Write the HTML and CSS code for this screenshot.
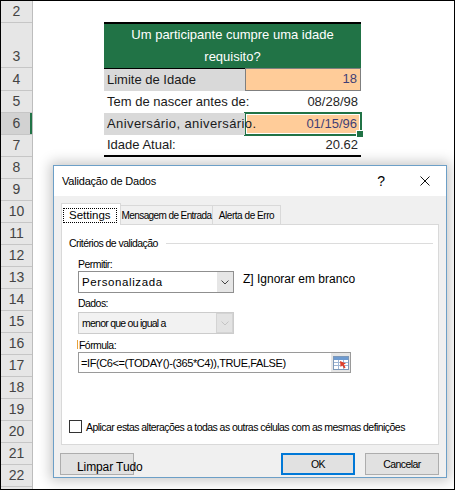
FILE: index.html
```html
<!DOCTYPE html>
<html>
<head>
<meta charset="utf-8">
<title>Validação de Dados</title>
<link rel="stylesheet" href="styles.css">
</head>
<body>
<div class="frame">
    <!-- row numbers -->
    <div class="rowheads">
        <div class="rh">2</div>
        <div class="rh tall">3</div>
        <div class="rh r4">4</div>
        <div class="rh">5</div>
        <div class="rh sel">6</div>
        <div class="rh">7</div>
        <div class="rh">8</div>
        <div class="rh">9</div>
        <div class="rh">10</div>
        <div class="rh">11</div>
        <div class="rh">12</div>
        <div class="rh">13</div>
        <div class="rh">14</div>
        <div class="rh">15</div>
        <div class="rh">16</div>
        <div class="rh">17</div>
        <div class="rh">18</div>
        <div class="rh">19</div>
        <div class="rh">20</div>
        <div class="rh">21</div>
        <div class="rh">22</div>
        <div class="rh"></div>
    </div>

    <!-- worksheet -->
    <div class="sheet">
        <div class="tbl">
            <div class="thead">Um participante cumpre uma idade<br>requisito?</div>
            <div class="trow r4">
                <div class="lbl shade">Limite de Idade</div>
                <div class="val input">18</div>
            </div>
            <div class="trow">
                <div class="lbl">Tem de nascer antes de:</div>
                <div class="val">08/28/98</div>
            </div>
            <div class="trow">
                <div class="lbl shade spread">Aniversário, aniversário.</div>
                <div class="val input active">01/15/96</div>
            </div>
            <div class="trow r7">
                <div class="lbl">Idade Atual:</div>
                <div class="val">20.62</div>
            </div>
        </div>
    </div>

    <!-- data validation dialog -->
    <div class="dialog">
        <div class="titlebar">
            <span class="title">Validação de Dados</span>
            <span class="help">?</span>
            <svg class="close" width="10" height="10" viewBox="0 0 10 10"><path d="M0.5 0.5L9.5 9.5M9.5 0.5L0.5 9.5" stroke="#111" stroke-width="1"/></svg>
        </div>
        <div class="dbody">
            <div class="tabs">
                <div class="tab active"><span class="focus">Settings</span></div>
                <div class="tab t2">Mensagem de Entrada</div>
                <div class="tab t3">Alerta de Erro</div>
            </div>
            <div class="panel">
                <div class="group"><span>Critérios de validação</span><i class="rule"></i></div>

                <div class="lab first">Permitir:</div>
                <div class="line">
                    <div class="combo">
                        <span class="txt wide">Personalizada</span>
                        <span class="arr"><svg width="8" height="5" viewBox="0 0 8 5"><path d="M0.5 0.5L4 4L7.5 0.5" fill="none" stroke="#444"/></svg></span>
                    </div>
                    <span class="ignore">Z] Ignorar em branco</span>
                </div>

                <div class="lab">Dados:</div>
                <div class="combo dis">
                    <span class="txt tight">menor que ou igual a</span>
                    <span class="arr"><svg width="8" height="5" viewBox="0 0 8 5"><path d="M0.5 0.5L4 4L7.5 0.5" fill="none" stroke="#c4c4c4"/></svg></span>
                </div>

                <div class="lab f">Fórmula:</div>
                <div class="formula">
                    <span class="expr">=IF(C6&lt;=(TODAY()-(365*C4)),TRUE,FALSE)</span>
                    <span class="pick">
                        <svg width="16" height="14" viewBox="0 0 16 14">
                            <rect x="0.5" y="0.5" width="15" height="13" fill="#fff" stroke="#7d98b8"/>
                            <rect x="1" y="1" width="14" height="3" fill="#6d9ad0"/>
                            <path d="M1 6.5H15M1 9.5H15M5.5 4V13M10.5 4V13" stroke="#9fb6d4"/>
                            <path d="M7 5L13 7.5L10.8 8.6L12.6 11.4L11 12.4L9.3 9.6L7.6 11Z" fill="#e0402a"/>
                        </svg>
                    </span>
                </div>

                <div class="apply"><i class="box"></i><span>Aplicar estas alterações a todas as outras células com as mesmas definições</span></div>
            </div>
            <div class="buttons">
                <button class="btn clear">Limpar Tudo</button>
                <button class="btn ok">OK</button>
                <button class="btn cancel">Cancelar</button>
            </div>
        </div>
    </div>
</div>
</body>
</html>
```

FILE: styles.css
```css
* {
    box-sizing: border-box;
}

body {
    margin: 0;
    background: #fff;
    font-family: "Liberation Sans", Arial, sans-serif;
}

.frame {
    position: relative;
    display: flex;
    width: 455px;
    height: 490px;
    border: 1px solid #000;
    overflow: hidden;
    background: #fff;
}

/* row headers */
.rowheads {
    flex: none;
    width: 32px;
    background: #e6e6e6;
    border-right: 1px solid #bdbdbd;
}

.rh {
    display: flex;
    align-items: flex-end;
    justify-content: center;
    height: 22px;
    padding-bottom: 1px;
    border-bottom: 1px solid #c6c6c6;
    font-size: 14px;
    line-height: 20px;
    color: #444;
}

.rh.tall { height: 45px; }
.rh.r4 { height: 23px; }

.rh.sel {
    background: #d2d2d2;
    box-shadow: inset -2px 0 #217346;
}

/* worksheet table */
.sheet {
    flex: 1;
}

.tbl {
    width: 257px;
    margin: 21px 0 0 71px;
    border-top: 2px solid #000;
    border-bottom: 2px solid #000;
    font-size: 13px;
    color: #1a1a1a;
}

.thead {
    height: 44px;
    background: #217346;
    color: #fff;
    text-align: center;
    line-height: 22px;
}

.trow {
    display: grid;
    grid-template-columns: 141px 116px;
    height: 22px;
    line-height: 22px;
}

.trow.r4 {
    height: 23px;
}

.trow.r7 {
    height: 20px;
    line-height: 20px;
}

.lbl {
    position: relative;
    z-index: 2;
    padding-left: 3px;
    white-space: nowrap;
}

.lbl.shade {
    background: #d9d9d9;
}

.lbl.spread {
    letter-spacing: 0.4px;
}

.r4 .lbl {
    border-top: 1px solid #000;
    line-height: 21px;
}

.val {
    position: relative;
    padding-right: 3px;
    text-align: right;
    color: #262626;
}

.val.input {
    background: #ffcc99;
    color: #3f3f76;
    border: 1px solid #7f7f7f;
    line-height: 20px;
}

.val.active::before {
    content: '';
    position: absolute;
    top: -2px;
    left: -2px;
    right: -2px;
    bottom: -2px;
    border: 2px solid #217346;
    box-shadow: inset 0 0 0 1px #fff;
}

.val.active::after {
    content: '';
    position: absolute;
    right: -4px;
    bottom: -4px;
    width: 6px;
    height: 6px;
    background: #217346;
    border: 1px solid #fff;
}

/* dialog */
.dialog {
    position: absolute;
    left: 52px;
    top: 164px;
    display: flex;
    flex-direction: column;
    width: 394px;
    height: 313px;
    background: #f0f0f0;
    border: 1px solid #6c9fc7;
    box-shadow: 0 0 12px 3px rgba(0, 0, 0, 0.22);
    font-size: 10.5px;
    letter-spacing: -0.55px;
    color: #000;
    z-index: 5;
}

.titlebar {
    display: flex;
    align-items: center;
    height: 30px;
    padding-left: 8px;
    background: #fff;
}

.title {
    flex: 1;
    font-size: 11px;
    letter-spacing: -0.2px;
}

.help {
    font-size: 14px;
    letter-spacing: 0;
    margin-right: 35px;
}

.close {
    margin-right: 16px;
}

.dbody {
    flex: 1;
    padding: 7px 7px 0 7px;
}

.tabs {
    display: flex;
    align-items: flex-end;
}

.tab {
    height: 19px;
    padding-top: 3px;
    background: #f0f0f0;
    border: 1px solid #d9d9d9;
    border-bottom: none;
    font-size: 10px;
    letter-spacing: -0.6px;
    line-height: 14px;
    text-align: center;
    white-space: nowrap;
}

.tab + .tab {
    border-left: none;
}

.tab.t2 { width: 92px; }
.tab.t3 { width: 68px; letter-spacing: -0.45px; }

.tab.active {
    position: relative;
    z-index: 1;
    width: 60px;
    height: 22px;
    margin-bottom: -1px;
    padding: 4px 0 0 1px;
    background: #fff;
}

.focus {
    display: block;
    width: 54px;
    height: 15px;
    padding-left: 5px;
    border: 1px dotted #000;
    font-size: 11.5px;
    letter-spacing: 0;
    line-height: 13px;
    text-align: left;
}

.panel {
    height: 221px;
    padding: 11px 5px 0 7px;
    background: #fff;
    border: 1px solid #d9d9d9;
}

.group {
    display: flex;
    align-items: center;
    height: 14px;
}

.group .rule {
    flex: 1;
    height: 1px;
    margin-left: 8px;
    background: #dcdcdc;
}

.lab {
    height: 14px;
    margin-top: 3px;
    padding-left: 9px;
    line-height: 14px;
}

.lab.first {
    margin-top: 7px;
}

.lab.f {
    margin-top: 4px;
    padding-left: 8px;
}

.lab.f::before {
    content: '';
    display: inline-block;
    width: 1px;
    height: 9px;
    margin-right: 1px;
    background: #e8a33c;
}

.line {
    display: flex;
    align-items: flex-start;
}

.combo {
    display: flex;
    width: 156px;
    height: 22px;
    margin-left: 9px;
    background: #fff;
    border: 1px solid #8f8f8f;
}

.combo .txt {
    flex: 1;
    padding-left: 3px;
    line-height: 20px;
    white-space: nowrap;
}

.txt.wide {
    font-size: 11.5px;
    letter-spacing: 0.6px;
}

.txt.tight {
    letter-spacing: -0.75px;
}

.combo .arr {
    display: flex;
    align-items: center;
    justify-content: center;
    width: 17px;
    background: #e6e6e6;
    border-left: 1px solid #fff;
}

.combo.dis {
    margin-top: 2px;
    background: #f2f2f2;
    border-color: #cccccc;
}

.combo.dis .arr {
    background: #e3e3e3;
    border: 1px solid #d4d4d4;
}

.ignore {
    margin-left: 9px;
    font-size: 12px;
    letter-spacing: 0;
    line-height: 16px;
}

.formula {
    display: flex;
    align-items: center;
    width: 273px;
    height: 21px;
    margin-left: 9px;
    background: #fff;
    border: 1px solid #9a9a9a;
}

.formula .expr {
    padding-left: 2px;
    font-size: 11px;
    letter-spacing: -0.4px;
    white-space: nowrap;
}

.pick {
    display: flex;
    align-items: center;
    justify-content: center;
    width: 19px;
    height: 19px;
    margin-left: auto;
    background: #e6e6e6;
}

.apply {
    display: flex;
    align-items: center;
    margin-top: 47px;
    white-space: nowrap;
}

.apply .box {
    width: 13px;
    height: 13px;
    margin-right: 4px;
    background: #fff;
    border: 1px solid #333;
}

.buttons {
    display: flex;
    margin-top: 8px;
}

.btn {
    width: 74px;
    height: 22px;
    padding: 0;
    background: #e1e1e1;
    border: 1px solid #adadad;
    font-family: inherit;
    font-size: inherit;
    letter-spacing: inherit;
    color: #000;
}

.btn.clear {
    margin-left: -1px;
    padding: 5px 0 0 16px;
    text-align: left;
    white-space: nowrap;
    overflow: visible;
    font-size: 12px;
    letter-spacing: -0.1px;
}

.btn.ok {
    margin-left: auto;
    border: 2px solid #0078d7;
}

.btn.cancel {
    margin-left: 10px;
}
```
